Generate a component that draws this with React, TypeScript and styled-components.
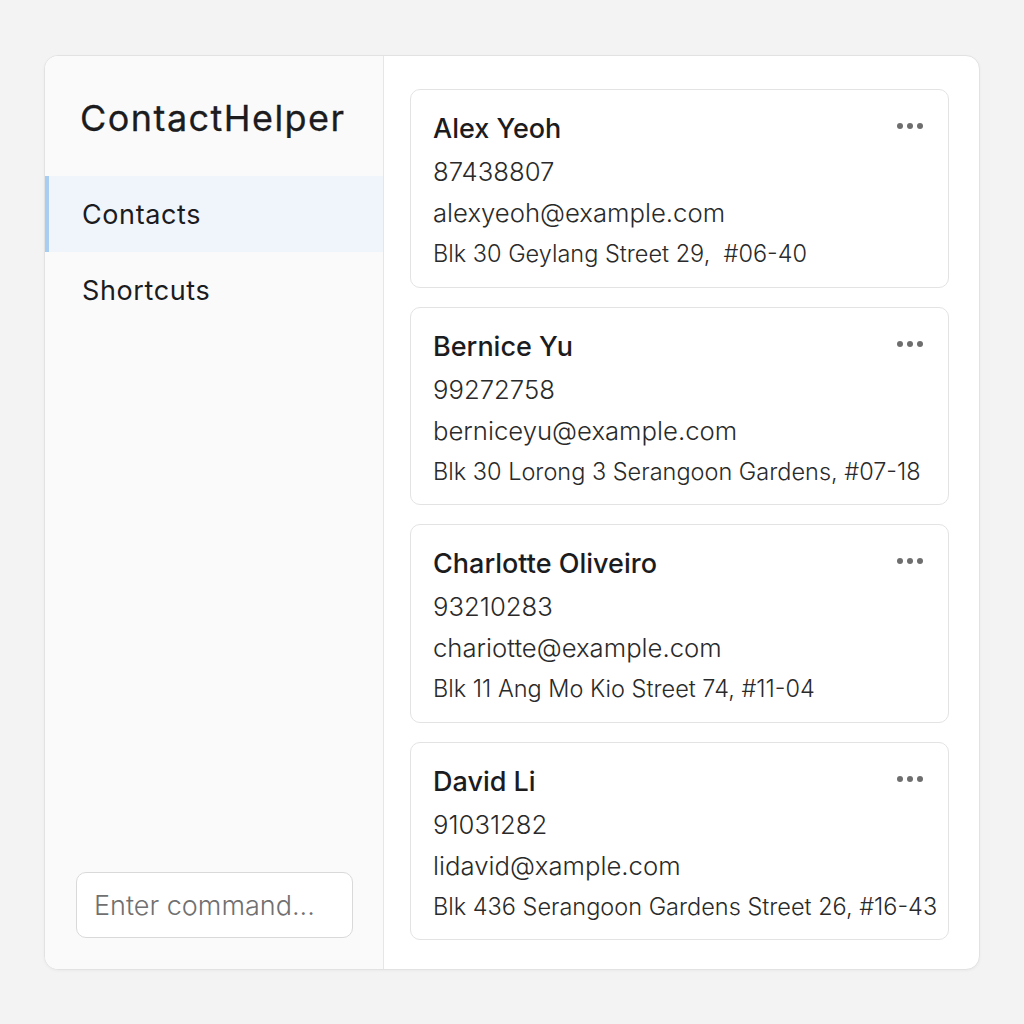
import React from "react";
import styled, { createGlobalStyle } from "styled-components";

const Global = createGlobalStyle`
  html, body { margin: 0; padding: 0; background: #f3f3f3; }
  body { font-family: Inter, "Noto Sans", "Liberation Sans", sans-serif; color: #1c1c1e; }
  * { box-sizing: border-box; }
`;

const Page = styled.div`
  width: 1024px;
  height: 1024px;
  padding: 55px 44px 54px 44px;
  display: flex;
`;

const Window = styled.div`
  flex: 1;
  min-width: 0;
  display: flex;
  background: #ffffff;
  border: 1px solid #e2e2e2;
  border-radius: 14px;
  overflow: hidden;
  box-shadow: 0 1px 3px rgba(0,0,0,0.04);
`;

const Sidebar = styled.aside`
  width: 339px;
  flex-shrink: 0;
  display: flex;
  flex-direction: column;
  background: #fafafa;
  border-right: 1px solid #e6e6e6;
  padding: 0 0 31px 0;
`;

const Title = styled.h1`
  margin: 0;
  padding: 40px 0 0 35px;
  height: 120px;
  font-size: 36px;
  font-weight: 400;
  letter-spacing: 1.45px;
  color: #1c1c1e;
  -webkit-text-stroke: 0.3px #1c1c1e;
`;

const NavItem = styled.div<{ $active?: boolean }>`
  height: 76px;
  display: flex;
  align-items: center;
  padding-left: ${(p) => (p.$active ? "33px" : "37px")};
  font-size: 27px;
  font-weight: 400;
  letter-spacing: 0.6px;
  color: #1c1c1e;
  background: ${(p) => (p.$active ? "#f0f5fc" : "transparent")};
  border-left: ${(p) => (p.$active ? "4px solid #a9cdf1" : "none")};
`;

const CommandInput = styled.input`
  margin: auto 30px 0 31px;
  height: 66px;
  border: 1px solid #d9d9d9;
  border-radius: 10px;
  background: #ffffff;
  padding: 0 17px;
  font-family: inherit;
  font-size: 27px;
  font-weight: 300;
  color: #333;
  outline: none;
  &::placeholder { color: #707070; }
`;

const Main = styled.main`
  flex: 1;
  min-width: 0;
  display: flex;
  flex-direction: column;
  gap: 19px;
  padding: 33px 30px 29px 26px;
`;

const Card = styled.div`
  position: relative;
  height: 199px;
  min-width: 0;
  border: 1px solid #e3e3e3;
  border-radius: 10px;
  background: #ffffff;
  padding: 20px 8px 0 22px;
  display: flex;
  flex-direction: column;
`;

const Name = styled.div`
  font-size: 27px;
  font-weight: 500;
  line-height: 38px;
  color: #1c1c1e;
  margin-bottom: 3px;
`;

const Line = styled.div<{ $small?: boolean }>`
  font-size: ${(p) => (p.$small ? "23.5px" : "25.7px")};
  font-weight: 300;
  line-height: 41px;
  color: #2a2a2a;
  white-space: pre;
`;

const More = styled.div`
  position: absolute;
  top: 33px;
  right: 25px;
  display: flex;
  gap: 4px;
`;

const Dot = styled.span`
  width: 6px;
  height: 6px;
  border-radius: 50%;
  background: #6e6e6e;
`;

const contacts = [
  { name: "Alex Yeoh", phone: "87438807", email: "alexyeoh@example.com", address: "Blk 30 Geylang Street 29,  #06-40" },
  { name: "Bernice Yu", phone: "99272758", email: "berniceyu@example.com", address: "Blk 30 Lorong 3 Serangoon Gardens, #07-18" },
  { name: "Charlotte Oliveiro", phone: "93210283", email: "chariotte@example.com", address: "Blk 11 Ang Mo Kio Street 74, #11-04" },
  { name: "David Li", phone: "91031282", email: "lidavid@xample.com", address: "Blk 436 Serangoon Gardens Street 26, #16-43" },
];

export default function App() {
  return (
    <>
      <Global />
      <Page>
        <Window>
          <Sidebar>
            <Title>ContactHelper</Title>
            <NavItem $active>Contacts</NavItem>
            <NavItem>Shortcuts</NavItem>
            <CommandInput placeholder="Enter command..." />
          </Sidebar>
          <Main>
            {contacts.map((c) => (
              <Card key={c.name}>
                <Name>{c.name}</Name>
                <Line>{c.phone}</Line>
                <Line>{c.email}</Line>
                <Line $small>{c.address}</Line>
                <More>
                  <Dot />
                  <Dot />
                  <Dot />
                </More>
              </Card>
            ))}
          </Main>
        </Window>
      </Page>
    </>
  );
}
